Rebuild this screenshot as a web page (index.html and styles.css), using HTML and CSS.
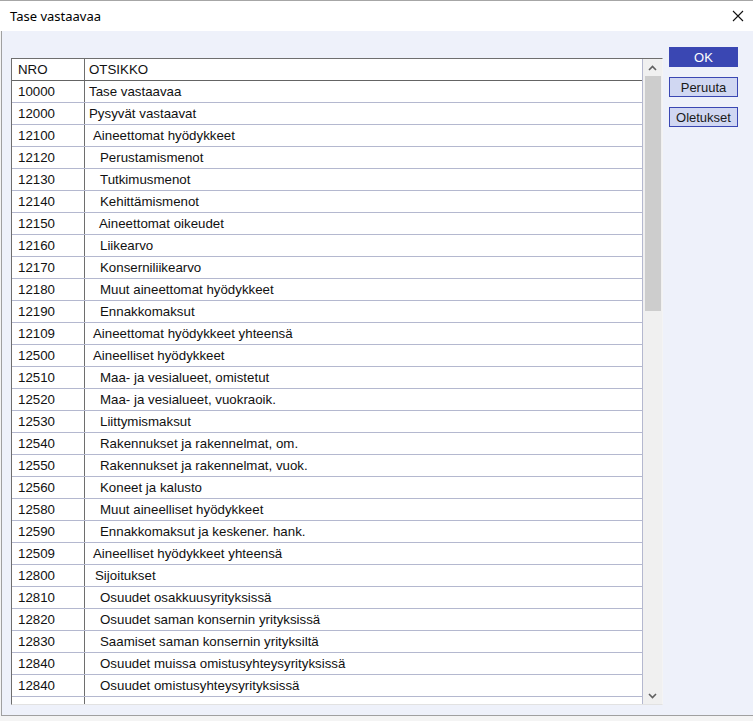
FILE: index.html
```html
<!DOCTYPE html>
<html lang="fi">
<head>
    <meta charset="UTF-8">
    <title>Tase vastaavaa</title>
    <link rel="stylesheet" href="styles.css">
</head>
<body>
<div class="window">
    <div class="titlebar">
        <span class="title">Tase vastaavaa</span>
        <svg class="close" width="12" height="12" viewBox="0 0 12 12"><path d="M1 1L11 11M11 1L1 11" stroke="#111" stroke-width="1.1" fill="none"/></svg>
    </div>

    <div class="panel">
        <div class="grid">
            <div class="list">
                <div class="row head">
                    <div class="nro">NRO</div>
                    <div class="name">OTSIKKO</div>
                </div>
                <div class="row"><div class="nro">10000</div><div class="name">Tase vastaavaa</div></div>
                <div class="row"><div class="nro">12000</div><div class="name">Pysyvät vastaavat</div></div>
                <div class="row"><div class="nro">12100</div><div class="name l1">Aineettomat hyödykkeet</div></div>
                <div class="row"><div class="nro">12120</div><div class="name l2">Perustamismenot</div></div>
                <div class="row"><div class="nro">12130</div><div class="name l2">Tutkimusmenot</div></div>
                <div class="row"><div class="nro">12140</div><div class="name l2">Kehittämismenot</div></div>
                <div class="row"><div class="nro">12150</div><div class="name l2b">Aineettomat oikeudet</div></div>
                <div class="row"><div class="nro">12160</div><div class="name l2">Liikearvo</div></div>
                <div class="row"><div class="nro">12170</div><div class="name l2">Konserniliikearvo</div></div>
                <div class="row"><div class="nro">12180</div><div class="name l2">Muut aineettomat hyödykkeet</div></div>
                <div class="row"><div class="nro">12190</div><div class="name l2">Ennakkomaksut</div></div>
                <div class="row"><div class="nro">12109</div><div class="name l1">Aineettomat hyödykkeet yhteensä</div></div>
                <div class="row"><div class="nro">12500</div><div class="name l1">Aineelliset hyödykkeet</div></div>
                <div class="row"><div class="nro">12510</div><div class="name l2">Maa- ja vesialueet, omistetut</div></div>
                <div class="row"><div class="nro">12520</div><div class="name l2">Maa- ja vesialueet, vuokraoik.</div></div>
                <div class="row"><div class="nro">12530</div><div class="name l2">Liittymismaksut</div></div>
                <div class="row"><div class="nro">12540</div><div class="name l2">Rakennukset ja rakennelmat, om.</div></div>
                <div class="row"><div class="nro">12550</div><div class="name l2">Rakennukset ja rakennelmat, vuok.</div></div>
                <div class="row"><div class="nro">12560</div><div class="name l2">Koneet ja kalusto</div></div>
                <div class="row"><div class="nro">12580</div><div class="name l2">Muut aineelliset hyödykkeet</div></div>
                <div class="row"><div class="nro">12590</div><div class="name l2">Ennakkomaksut ja keskener. hank.</div></div>
                <div class="row"><div class="nro">12509</div><div class="name l1">Aineelliset hyödykkeet yhteensä</div></div>
                <div class="row"><div class="nro">12800</div><div class="name l1b">Sijoitukset</div></div>
                <div class="row"><div class="nro">12810</div><div class="name l2">Osuudet osakkuusyrityksissä</div></div>
                <div class="row"><div class="nro">12820</div><div class="name l2">Osuudet saman konsernin yrityksissä</div></div>
                <div class="row"><div class="nro">12830</div><div class="name l2">Saamiset saman konsernin yrityksiltä</div></div>
                <div class="row"><div class="nro">12840</div><div class="name l2">Osuudet muissa omistusyhteysyrityksissä</div></div>
                <div class="row"><div class="nro">12840</div><div class="name l2">Osuudet omistusyhteysyrityksissä</div></div>
                <div class="row"><div class="nro"></div><div class="name"></div></div>
            </div>

            <!-- scrollbar -->
            <div class="scrollbar">
                <div class="arrow">
                    <svg width="9" height="6" viewBox="0 0 9 6"><path d="M1 5L4.5 1.5L8 5" stroke="#606060" stroke-width="1.6" fill="none"/></svg>
                </div>
                <div class="thumb"></div>
                <div class="track"></div>
                <div class="arrow">
                    <svg width="9" height="6" viewBox="0 0 9 6"><path d="M1 1L4.5 4.5L8 1" stroke="#606060" stroke-width="1.6" fill="none"/></svg>
                </div>
            </div>
        </div>

        <div class="buttons">
            <button class="btn btn-ok">OK</button>
            <button class="btn">Peruuta</button>
            <button class="btn">Oletukset</button>
        </div>
    </div>
</div>
</body>
</html>
```

FILE: styles.css
```css
body {
    margin: 0;
    font-family: "Liberation Sans", Arial, sans-serif;
    color: #111;
}
.window {
    width: 753px;
    height: 721px;
    background: #f4f4f4;
    overflow: hidden;
}
.titlebar {
    height: 30px;
    border-top: 1px solid #a6a6a6;
    background: #fff;
    display: flex;
    align-items: center;
    justify-content: space-between;
    padding: 0 8px 0 10px;
}
.title {
    font-family: "Noto Sans", sans-serif;
    font-size: 13px;
    color: #000;
}
.close {
    margin-right: 1px;
}
.panel {
    height: 684px;
    margin-left: 1px;
    background: #eef1fa;
    border-left: 1px solid #a0a0a0;
    border-bottom: 1px solid #a0a0a0;
    display: flex;
    align-items: flex-start;
}
.grid {
    margin: 27px 0 0 9px;
    display: flex;
    height: 645px;
    border-top: 1px solid #6e6e6e;
    border-left: 1px solid #6e6e6e;
    border-right: 1px solid #f4f4f4;
    border-bottom: 1px solid #e2e2e2;
    background: #fff;
}
.list {
    width: 630px;
    height: 645px;
    overflow: hidden;
    border-right: 1px solid #b4b8cf;
    font-size: 13.3px;
}
.row {
    display: flex;
    height: 21px;
    line-height: 21px;
    border-bottom: 1px solid #b4b8cf;
}
.row .nro {
    width: 66px;
    padding-left: 6px;
    border-right: 1px solid #6e6e6e;
    flex-shrink: 0;
}
.row .name {
    padding-left: 4px;
    white-space: pre;
}
.row.head {
    border-bottom: 1px solid #646464;
    margin-right: -1px;
    border-right: 1px solid #646464;
}
.name.l1 { padding-left: 8px; }
.name.l1b { padding-left: 10px; }
.name.l2 { padding-left: 15px; }
.name.l2b { padding-left: 14px; }
.scrollbar {
    width: 19px;
    height: 645px;
    background: #f0f0f0;
    display: flex;
    flex-direction: column;
}
.arrow {
    height: 17px;
    display: flex;
    align-items: center;
    justify-content: center;
}
.thumb {
    height: 235px;
    margin: 0 1px 0 2px;
    background: #cdcdcd;
}
.track {
    flex: 1;
}
.buttons {
    margin: 16px 0 0 6px;
    display: flex;
    flex-direction: column;
    gap: 10px;
}
.btn {
    width: 69px;
    height: 20px;
    padding: 0;
    border: 1px solid #3a47b3;
    background: #d0d7f2;
    color: #1a1a1a;
    font-family: "Liberation Sans", Arial, sans-serif;
    font-size: 13px;
}
.btn-ok {
    background: #3a47b3;
    color: #fff;
}
```
